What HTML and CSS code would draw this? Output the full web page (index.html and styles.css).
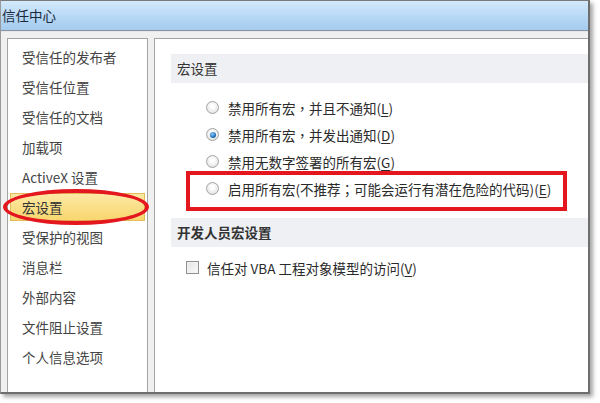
FILE: index.html
```html
<!DOCTYPE html>
<html lang="zh-CN">
<head>
<meta charset="utf-8">
<title>信任中心</title>
<link rel="stylesheet" href="styles.css">
</head>
<body>
<div class="window">
  <div class="titlebar">信任中心</div>
  <div class="content">
    <div class="nav">
      <div class="nav-item">受信任的发布者</div>
      <div class="nav-item">受信任位置</div>
      <div class="nav-item">受信任的文档</div>
      <div class="nav-item">加载项</div>
      <div class="nav-item">ActiveX 设置</div>
      <div class="nav-item selected">宏设置<span class="ellipse"></span></div>
      <div class="nav-item">受保护的视图</div>
      <div class="nav-item">消息栏</div>
      <div class="nav-item">外部内容</div>
      <div class="nav-item">文件阻止设置</div>
      <div class="nav-item">个人信息选项</div>
    </div>
    <div class="main">
      <div class="section-head">宏设置</div>
      <div class="options">
        <div class="opt"><span class="radio"></span><span>禁用所有宏<span class="punc" lang="zh-TW">，</span>并且不通知(<u>L</u>)</span></div>
        <div class="opt"><span class="radio checked"></span><span>禁用所有宏<span class="punc" lang="zh-TW">，</span>并发出通知(<u>D</u>)</span></div>
        <div class="opt"><span class="radio"></span><span>禁用无数字签署的所有宏(<u>G</u>)</span></div>
        <div class="opt highlight"><span class="radio"></span><span>启用所有宏(不推荐<span class="punc" lang="zh-TW">；</span>可能会运行有潜在危险的代码)(<u>E</u>)</span><span class="redbox"></span></div>
      </div>
      <div class="section-head bold">开发人员宏设置</div>
      <div class="check-row"><span class="checkbox"></span><span>信任对 VBA 工程对象模型的访问(<u>V</u>)</span></div>
    </div>
  </div>
</div>
</body>
</html>
```

FILE: styles.css
```css
html, body {
  margin: 0;
  padding: 0;
}
body {
  width: 600px;
  height: 403px;
  overflow: hidden;
  background: #ffffff;
  font-family: "Noto Sans CJK SC", "Noto Sans", sans-serif;
  font-size: 13.5px;
}
.window {
  width: 590px;
  height: 394px;
  box-sizing: border-box;
  display: flex;
  flex-direction: column;
  border-top: 1px solid #7a7a7a;
  border-left: 1px solid #9a9a9a;
  border-right: 2px solid #6e6e6e;
  border-bottom: 2px solid #6e6e6e;
  box-shadow: 3px 3px 4px rgba(0, 0, 0, 0.35);
  background: #f0f0f0;
}
.titlebar {
  height: 29px;
  line-height: 28px;
  padding-left: 1px;
  color: #1b2a3a;
  background: linear-gradient(#d4e9fb, #b4d6f5 60%, #a6cbee);
  border-bottom: 1px solid #8794a3;
  flex: none;
}
.content {
  flex: 1;
  display: flex;
  gap: 6px;
  padding: 6px 0 0 6px;
  border-top: 1px solid #e6e6e6;
  min-height: 0;
}
.nav {
  position: relative;
  width: 141px;
  box-sizing: border-box;
  background: #fff;
  border: 1px solid #a3a3a3;
  border-bottom: none;
  padding-top: 3px;
  color: #444;
  display: flex;
  flex-direction: column;
}
.nav-item {
  position: relative;
  height: 28px;
  line-height: 28px;
  margin: 1px 2px;
  padding-left: 12px;
  box-sizing: border-box;
  white-space: nowrap;
  flex: none;
}
.nav-item.selected {
  background: linear-gradient(#fde9a4, #f8d66f);
  border: 1px solid #e2bd5a;
  line-height: 26px;
  padding-left: 11px;
  color: #333;
}
.ellipse {
  position: absolute;
  left: -8px;
  top: -5px;
  width: 146px;
  height: 36px;
  box-sizing: border-box;
  border: 4px solid #e4171f;
  border-radius: 50%;
}
.main {
  flex: 1;
  background: #fff;
  border-left: 1px solid #a3a3a3;
  border-top: 1px solid #a3a3a3;
  padding-top: 15px;
  color: #2a2a2a;
}
.section-head {
  margin-left: 16px;
  height: 29px;
  line-height: 29px;
  padding-left: 6px;
  background: #eef0f3;
  color: #333;
}
.section-head.bold {
  font-weight: bold;
}
.options {
  padding: 11px 0 16px 0;
}
.opt {
  position: relative;
  height: 27px;
  display: flex;
  align-items: center;
  padding-left: 51px;
  white-space: nowrap;
}
.punc {
  font-family: "Noto Sans CJK TC", "Noto Sans CJK SC", sans-serif;
}
.radio {
  width: 13px;
  height: 13px;
  box-sizing: border-box;
  border-radius: 50%;
  border: 1px solid #a3a3a3;
  background: radial-gradient(circle at 50% 40%, #ffffff 20%, #dcdcdc 90%);
  margin-right: 9px;
  flex: none;
  display: flex;
  align-items: center;
  justify-content: center;
}
.radio.checked::after {
  content: "";
  width: 6px;
  height: 6px;
  border-radius: 50%;
  background: radial-gradient(circle at 40% 35%, #8fd0ff, #1f6fb8 60%, #0f3f75);
}
.redbox {
  position: absolute;
  left: 31px;
  top: -4px;
  width: 381px;
  height: 40px;
  box-sizing: border-box;
  border: 4px solid #e4171f;
}
.check-row {
  height: 27px;
  margin-top: 7px;
  display: flex;
  align-items: center;
  padding-left: 31px;
  white-space: nowrap;
}
.checkbox {
  width: 13px;
  height: 13px;
  box-sizing: border-box;
  border: 1px solid #8e8f8f;
  background: linear-gradient(135deg, #e4e4e4, #fafafa);
  box-shadow: inset 0 0 0 1px #f4f4f4;
  margin-right: 8px;
  flex: none;
}
u {
  text-underline-offset: 2px;
}
```
